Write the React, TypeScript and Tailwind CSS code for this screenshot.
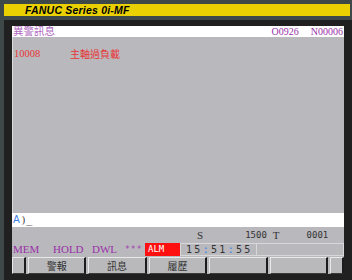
import React from "react";

const serif = { fontFamily: "'Liberation Serif', 'Noto Sans CJK TC', serif" };
const cjk = { fontFamily: "'Noto Sans CJK TC', 'Liberation Sans', sans-serif" };
const mono = { fontFamily: "'DejaVu Sans Mono', 'Liberation Mono', monospace" };

const keys = ["警報", "訊息", "履歷", "", ""];

function SoftKey({ label, wide = true }: { label?: string; wide?: boolean }) {
  return (
    <div
      className={`${wide ? "flex-1" : "w-[14px]"} h-full flex items-center justify-center bg-[#b9b9bc] border-t border-l border-t-[#e8e8e8] border-l-[#e8e8e8] border-r-2 border-b border-r-[#1c1c1c] border-b-[#3a3a3a] text-[10px] text-[#333] leading-none`}
      style={cjk}
    >
      {label}
    </div>
  );
}

export default function App() {
  return (
    <div className="w-[352px] h-[280px] bg-[#3e4848] overflow-hidden flex flex-col pt-[4px] pl-[4px]">
      {/* title bar */}
      <div className="h-[12px] mr-[2px] bg-[#ead000] flex items-center pl-[21px]">
        <span
          className="text-[10.5px] font-bold italic text-black leading-none tracking-[0.2px]"
          style={{ fontFamily: "'Liberation Sans', Arial, sans-serif" }}
        >
          FANUC Series 0i-MF
        </span>
      </div>

      {/* screen frame */}
      <div className="mt-[4px] flex-1 bg-[#202020] pl-[8px] pr-[8px] pt-[6px] pb-[6px] flex">
        <div className="flex-1 flex flex-col bg-[#b9b8bd]">
          {/* header */}
          <div className="h-[11px] bg-white flex items-center justify-between pl-[1px] pr-[1px]">
            <span className="text-[10.5px] leading-none text-[#b066c0]" style={cjk}>
              異警訊息
            </span>
            <div className="flex gap-[12px] text-[10px] leading-none text-[#9a30a8]" style={serif}>
              <span>O0926</span>
              <span>N00006</span>
            </div>
          </div>

          {/* alarm list */}
          <div className="flex-1 border-l border-[#dcdcdc] pt-[12px] pl-[1px]">
            <div className="flex items-center text-[#e83434] leading-none">
              <span className="w-[56px] text-[10.5px]" style={serif}>
                10008
              </span>
              <span className="text-[10px]" style={cjk}>
                主軸過負載
              </span>
            </div>
          </div>

          {/* input line */}
          <div className="h-[14px] bg-white flex items-center pl-[1px] text-[10px] leading-none">
            <span className="text-[#3b7de8]" style={{ fontFamily: "'DejaVu Sans', sans-serif" }}>
              A
            </span>
            <span className="text-[#333] ml-[2px]" style={serif}>
              )
            </span>
            <span className="text-[#333] ml-[1px]" style={mono}>
              _
            </span>
          </div>

          {/* S / T row */}
          <div className="h-[16px] flex items-center text-[#333] leading-none">
            <span className="ml-[185px] text-[11px]" style={serif}>
              S
            </span>
            <span className="ml-[42px] text-[9px]" style={mono}>
              1500
            </span>
            <span className="ml-[6px] text-[11px]" style={serif}>
              T
            </span>
            <span className="ml-[27px] text-[9px]" style={mono}>
              0001
            </span>
          </div>

          {/* status row */}
          <div className="h-[13px] flex items-stretch leading-none">
            <div className="w-[133px] flex items-center text-[#9a30a8] text-[11px] pl-[1px]" style={serif}>
              <span className="w-[40px]">MEM</span>
              <span className="w-[39px]">HOLD</span>
              <span className="w-[33px]">DWL</span>
              <span className="text-[8px] tracking-[1px] text-[#a040b0]" style={mono}>
                ***
              </span>
            </div>
            <div className="w-[35px] bg-[#ff1010] flex items-center pl-[3px] text-white text-[9px]" style={mono}>
              ALM
            </div>
            <div
              className="w-[77px] flex items-center pl-[5px] border border-[#d8d8d8] text-[#333] text-[10px] tracking-[2.3px]"
              style={mono}
            >
              15<span className="text-[#3b7de8]">:</span>51<span className="text-[#3b7de8]">:</span>55
            </div>
            <div className="flex-1 border border-l-0 border-[#d8d8d8]" />
          </div>

          {/* soft keys */}
          <div className="mt-[1px] h-[17px] flex gap-[2px]">
            <SoftKey wide={false} />
            {keys.map((k, i) => (
              <SoftKey key={i} label={k} />
            ))}
            <SoftKey wide={false} />
          </div>
        </div>
      </div>
    </div>
  );
}
